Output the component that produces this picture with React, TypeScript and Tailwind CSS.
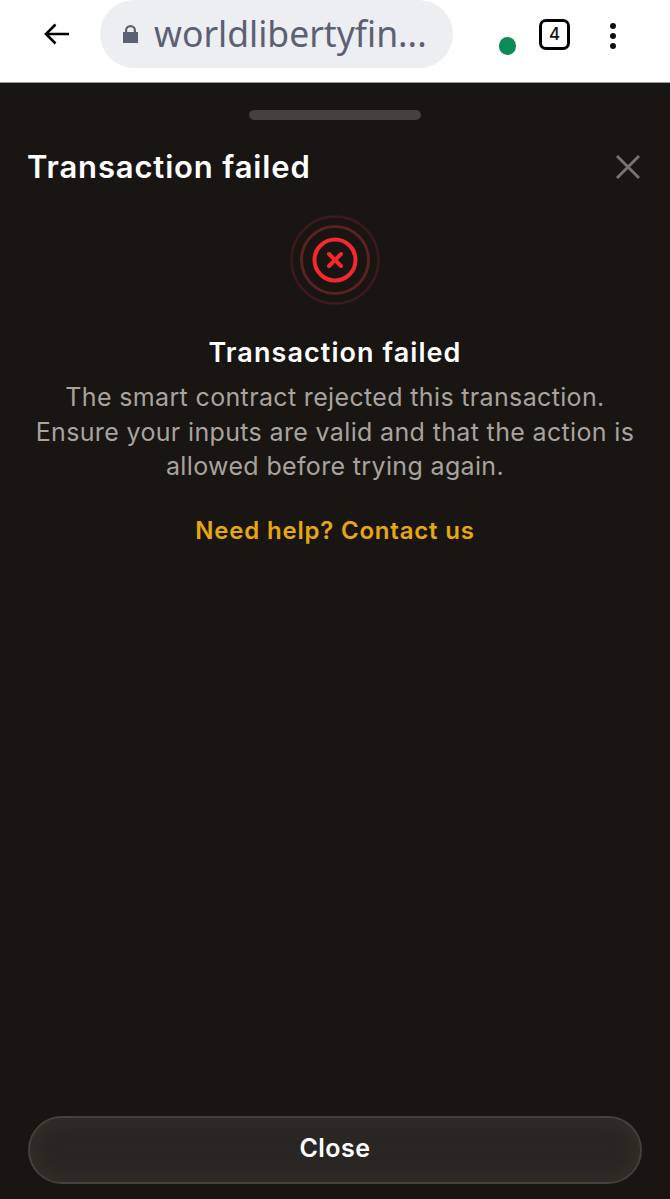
export default function App() {
  return (
    <div className="flex h-[1199px] w-[670px] flex-col overflow-hidden bg-[#181512] font-['Inter',sans-serif]">
      <header className="flex h-[83px] shrink-0 items-start border-b border-[#9a9a9a] bg-white">
        <svg className="ml-[44px] mt-[23px] shrink-0" width="26" height="22" viewBox="0 0 26 22" fill="none" stroke="#000" strokeWidth="2.6">
          <path d="M25 11H2M11.5 1.5 2 11l9.5 9.5" />
        </svg>
        <div className="ml-[30px] flex h-[68px] w-[353px] shrink-0 items-center rounded-[34px] bg-[#edeef2] pl-[22px]">
          <svg width="17" height="18" viewBox="0 0 17 18" className="shrink-0" fill="#5b6072">
            <path d="M3 8V5.5a5.5 5.5 0 0 1 11 0V8h-2.200V5.500a3.300 3.300 0 0 0-6.600 0V8z" />
            <rect x="1" y="7" width="15" height="11" />
          </svg>
          <span className="ml-[15px] whitespace-nowrap font-['Noto_Sans',sans-serif] text-[35.500px] leading-none text-[#5b6072]">worldlibertyfin...</span>
        </div>
        <div className="ml-[46px] mt-[37px] h-[18px] w-[17px] shrink-0 rounded-full bg-[#0b8c55]" />
        <div className="ml-[23px] mt-[19px] flex h-[31px] w-[31px] shrink-0 items-center justify-center rounded-[7px] border-[3px] border-black text-[17px] font-medium text-[#111]">4</div>
        <div className="ml-[40px] mt-[23px] flex shrink-0 flex-col gap-[4.500px]">
          <div className="h-[5.500px] w-[5.500px] rounded-full bg-[#111]" />
          <div className="h-[5.500px] w-[5.500px] rounded-full bg-[#111]" />
          <div className="h-[5.500px] w-[5.500px] rounded-full bg-[#111]" />
        </div>
      </header>

      <main className="flex flex-1 flex-col px-[28px]">
        <div className="mx-auto mt-[27px] h-[10px] w-[172px] rounded-full bg-[#45413d]" />
        <div className="mt-[27px] flex items-center justify-between">
          <h1 className="-ml-px whitespace-nowrap text-[31px] font-semibold leading-[40px] tracking-[0.85px] text-white">Transaction failed</h1>
          <svg width="26" height="26" viewBox="0 0 26 26" fill="none" stroke="#77736f" strokeWidth="3" className="mr-[1px]">
            <path d="M2 2l22 22M24 2 2 24" />
          </svg>
        </div>
        <div className="mt-[28px] flex justify-center">
          <svg width="90" height="90" viewBox="0 0 90 90" fill="none">
            <circle cx="45" cy="45" r="43.500" stroke="#3a1a1a" strokeWidth="2.500" />
            <circle cx="45" cy="45" r="33.500" stroke="#5c2222" strokeWidth="3" />
            <circle cx="45" cy="45" r="20.500" stroke="#f5282d" strokeWidth="4" />
            <path d="M39 39l12 12M51 39 39 51" stroke="#f5282d" strokeWidth="4" strokeLinecap="round" />
          </svg>
        </div>
        <h2 className="mt-[30px] whitespace-nowrap text-center text-[27px] font-semibold leading-[36px] tracking-[1.080px] text-white">Transaction failed</h2>
        <p className="mt-[9px] whitespace-nowrap text-center text-[25px] leading-[34.500px] tracking-[0.35px] text-[#a8a39e]">
          The smart contract rejected this transaction.
          <br />
          Ensure your inputs are valid and that the action is
          <br />
          allowed before trying again.
        </p>
        <a className="mt-[30px] whitespace-nowrap text-center text-[24px] font-semibold leading-[34px] tracking-[0.8px] text-[#e6a80f]">Need help? Contact us</a>
        <button className="mb-[15px] mt-auto flex h-[68px] w-full items-center justify-center rounded-[34px] border-2 border-[#45403a] bg-[#2a2624] pb-[2px] text-[25px] font-semibold tracking-[0.5px] text-white shadow-[inset_0_0_22px_#3a3128]">
          Close
        </button>
      </main>
    </div>
  );
}
